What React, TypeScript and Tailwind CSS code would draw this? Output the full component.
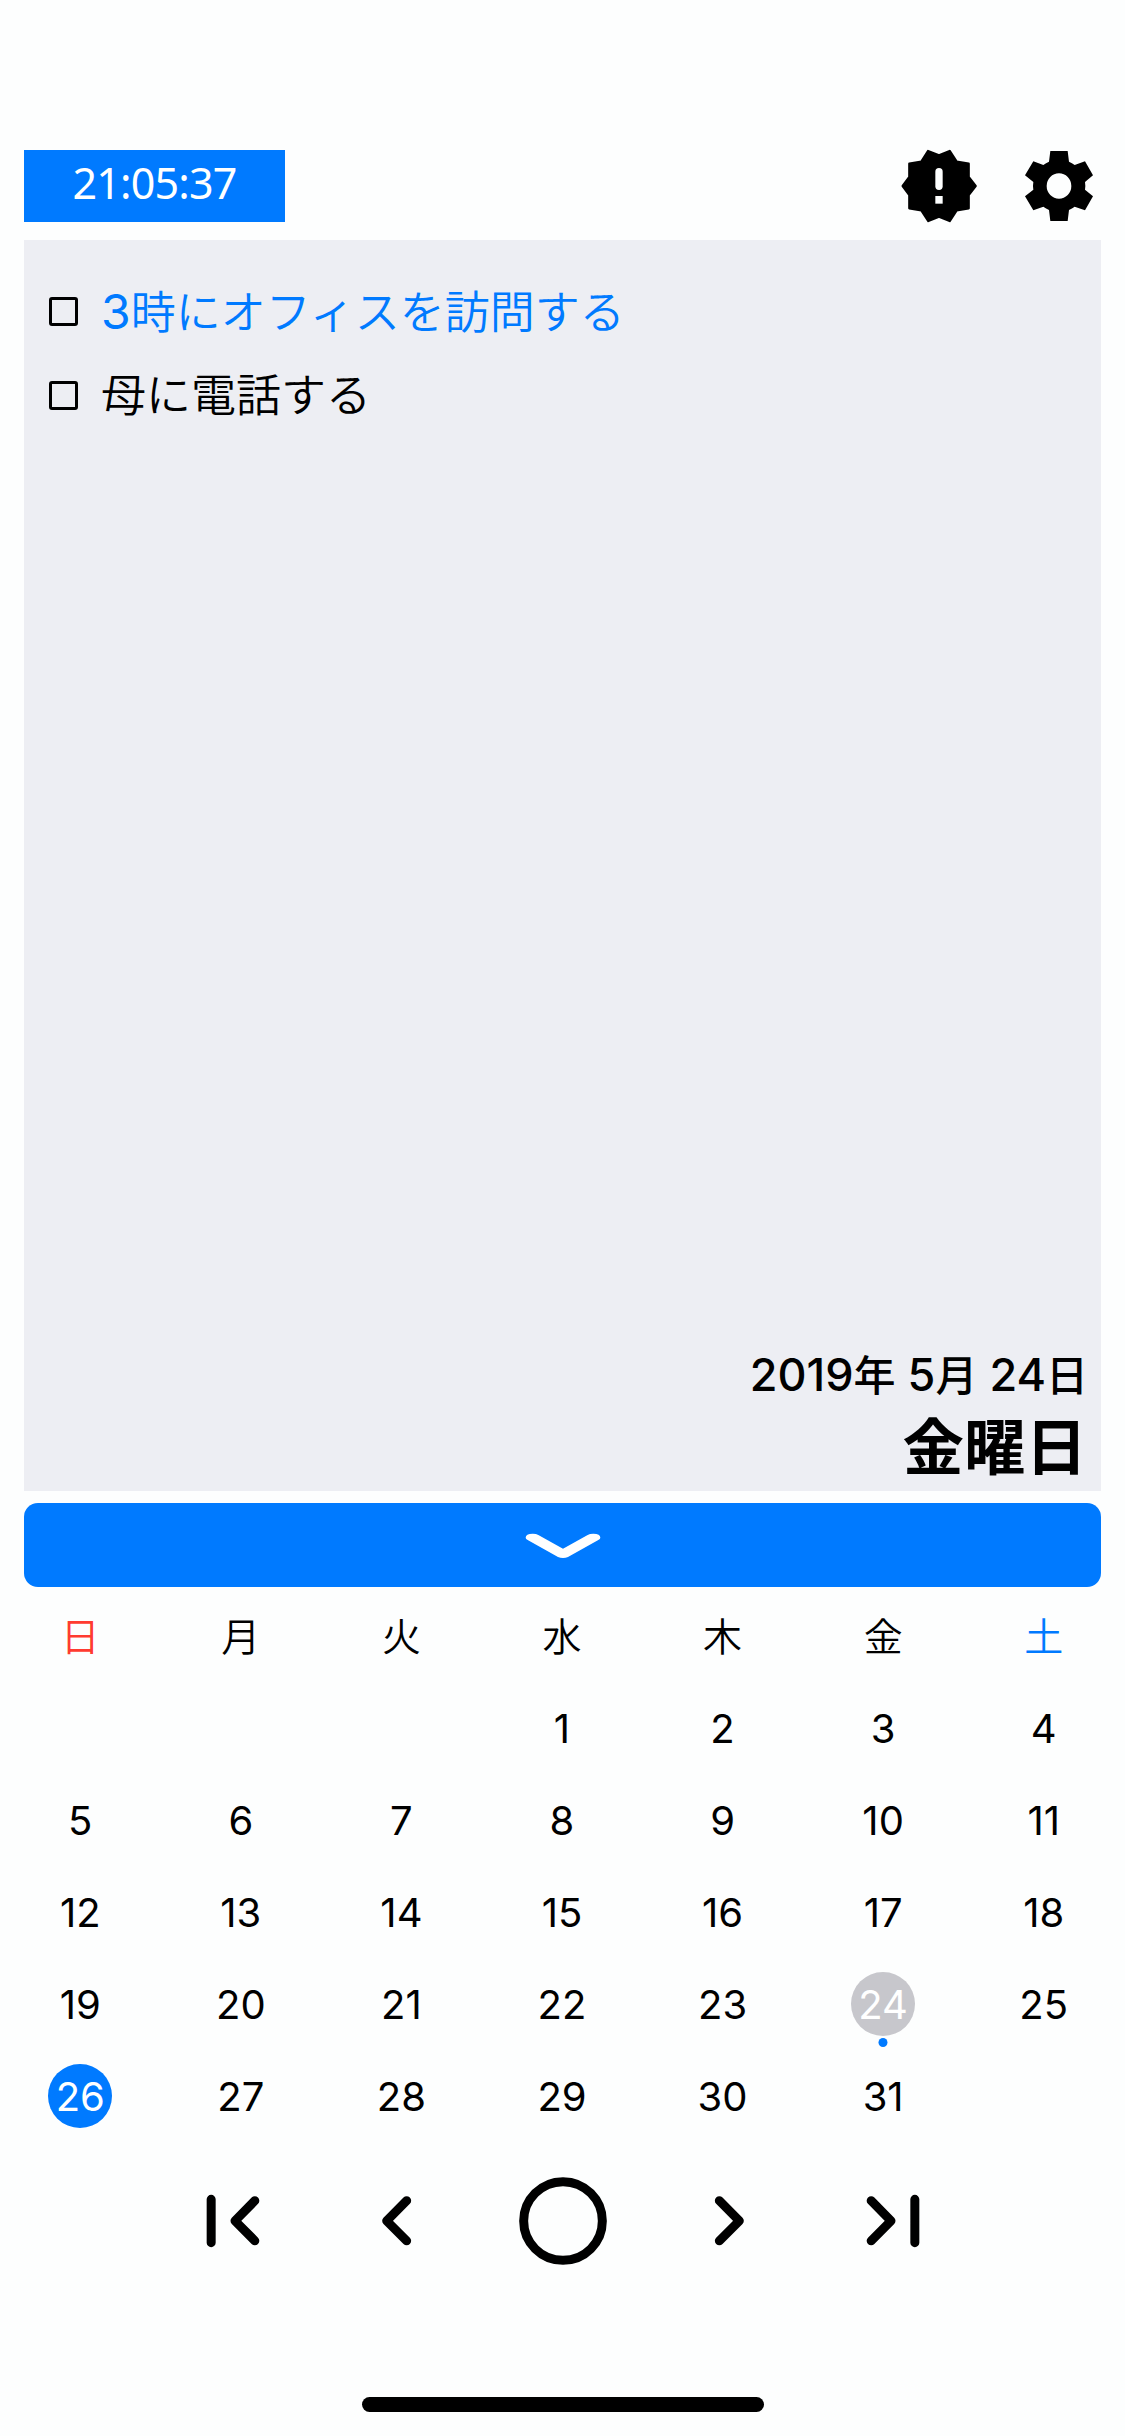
import React from "react";

const FONT = "font-['Inter','Noto_Sans_CJK_JP',sans-serif]";

const weekdays = ["日", "月", "火", "水", "木", "金", "土"];
const days: (number | null)[] = [
  null, null, null,
  ...Array.from({ length: 31 }, (_, i) => i + 1),
  null,
];

function AlertBadgeIcon() {
  return (
    <svg className="size-[78px]" viewBox="120 51 234 234">
      <path
        d="M204 63L237 76L269 63L290 95L326 101L326 141L347 168L326 195L326 235L290 241L269 273L237 260L205 273L184 241L148 235L148 195L128 168L148 141L148 101L184 95Z"
        fill="#000"
        stroke="#000"
        strokeWidth="7"
        strokeLinejoin="round"
      />
      <rect x="226" y="114" width="22" height="66" rx="11" fill="#fdfefe" />
      <rect x="226" y="198" width="22" height="23" fill="#fdfefe" />
    </svg>
  );
}

function GearIcon() {
  return (
    <svg className="size-[78px]" viewBox="480 51 234 234">
      <path
        fillRule="evenodd"
        d="M571 63H623L627 95Q636 99 644 105L675 94L699 136L675 156Q677 168 675 179L699 199L675 241L644 230Q636 236 627 240L623 273H571L567 240Q558 236 550 230L520 241L495 199L520 179Q518 168 520 156L495 136L520 94L550 105Q558 99 567 95ZM597 130A37 38 0 1 0 597 206A37 38 0 1 0 597 130Z"
      />
    </svg>
  );
}

function NavIcon({ children }: { children: React.ReactNode }) {
  return (
    <svg
      className="size-[90px]"
      viewBox="0 0 270 270"
      fill="none"
      stroke="#000"
      strokeWidth="27"
      strokeLinecap="round"
      strokeLinejoin="round"
    >
      {children}
    </svg>
  );
}

function Todo({ color, children }: { color: string; children: React.ReactNode }) {
  return (
    <li className={`flex h-[84px] items-center ${color}`}>
      <span className="mb-px size-[29px] rounded-[3px] border-3 border-black" />
      <span className="ml-[23px] text-[45px] leading-[84px] font-[350] whitespace-nowrap">{children}</span>
    </li>
  );
}

export default function App() {
  return (
    <div className={`flex h-[2436px] w-[1125px] flex-col overflow-hidden bg-[#fdfefe] text-black ${FONT}`}>
      <header className="flex h-[240px] items-start justify-between pt-[147px] pr-[27px] pl-6">
        <div className="mt-[3px] flex h-[72px] w-[261px] items-center justify-center bg-[#007aff] pb-2 font-['Noto_Sans','Noto_Sans_CJK_JP',sans-serif] text-[43px] leading-none tracking-[-0.8px] text-white">
          <span>21:05:37</span>
        </div>
        <div className="flex gap-[42px]">
          <AlertBadgeIcon />
          <GearIcon />
        </div>
      </header>

      <main className="mx-6 flex h-[1251px] flex-col justify-between bg-[#edeef3]">
        <ul className="pt-[30px] pl-[25px]">
          <Todo color="text-[#007aff]">
            <span className="text-[48px] font-normal">3</span>時にオフィスを訪問する
          </Todo>
          <Todo color="text-black">母に電話する</Todo>
        </ul>
        <div className="flex flex-col items-end pr-[13px] pb-[3px]">
          <p className="text-[45px] leading-[60px] font-medium whitespace-nowrap">
            2019<span className="text-[42px]">年</span> 5<span className="text-[42px]">月</span> 24
            <span className="text-[42px]">日</span>
          </p>
          <p className="mt-[2px] pr-px text-[61.500px] leading-[80px] font-bold">金曜日</p>
        </div>
      </main>

      <button className="mx-6 mt-3 flex h-[84px] shrink-0 items-center justify-center rounded-[14px] bg-[#007aff]">
        <svg className="mt-[2px] h-7 w-20" viewBox="129 126 240 84" fill="#fff">
          <path d="M158 131Q169 131 175 135L249 176L323 135Q329 131 340 131Q361 131 361 143Q361 147 355 150L264 201Q257 204 249 204Q241 204 234 201L143 150Q137 147 137 143Q137 131 158 131Z" />
        </svg>
      </button>

      <section className="mt-[3px] grid w-[1124px] shrink-0 grid-cols-7 text-center">
        {weekdays.map((d, i) => (
          <div
            key={d}
            className={`h-[92px] text-[39px] leading-[93px] font-[350] ${
              i === 0 ? "text-[#ff3b30]" : i === 6 ? "text-[#007aff]" : ""
            }`}
          >
            {d}
          </div>
        ))}
        {days.map((d, i) => (
          <div key={i} className="relative flex h-[92px] items-center justify-center text-[40px] leading-none">
            <span
              className={`flex size-16 items-center justify-center rounded-full pt-px ${
                d === 24 ? "bg-[#c7c7cc] text-white" : d === 26 ? "bg-[#007aff] text-white" : ""
              }`}
            >
              {d}
            </span>
            {d === 24 && (
              <span className="absolute bottom-[3px] left-1/2 size-[9px] -translate-x-1/2 rounded-full bg-[#007aff]" />
            )}
          </div>
        ))}
      </section>

      <nav className="mt-[34px] flex shrink-0 justify-center gap-[75px]">
        <NavIcon>
          <path d="M69.500 70V200M200.500 74L141 134.500L200.500 194.500" />
        </NavIcon>
        <NavIcon>
          <path d="M161 74L101 134.500L161 194.500" />
        </NavIcon>
        <NavIcon>
          <circle cx="135" cy="135" r="118" />
        </NavIcon>
        <NavIcon>
          <path d="M109 74L169 134.500L109 194.500" />
        </NavIcon>
        <NavIcon>
          <path d="M69.500 74L129 134.500L69.500 194.500M200.500 70V200" />
        </NavIcon>
      </nav>

      <div className="mt-[131px] h-[15px] w-[402px] shrink-0 self-center rounded-full bg-black" />
    </div>
  );
}
